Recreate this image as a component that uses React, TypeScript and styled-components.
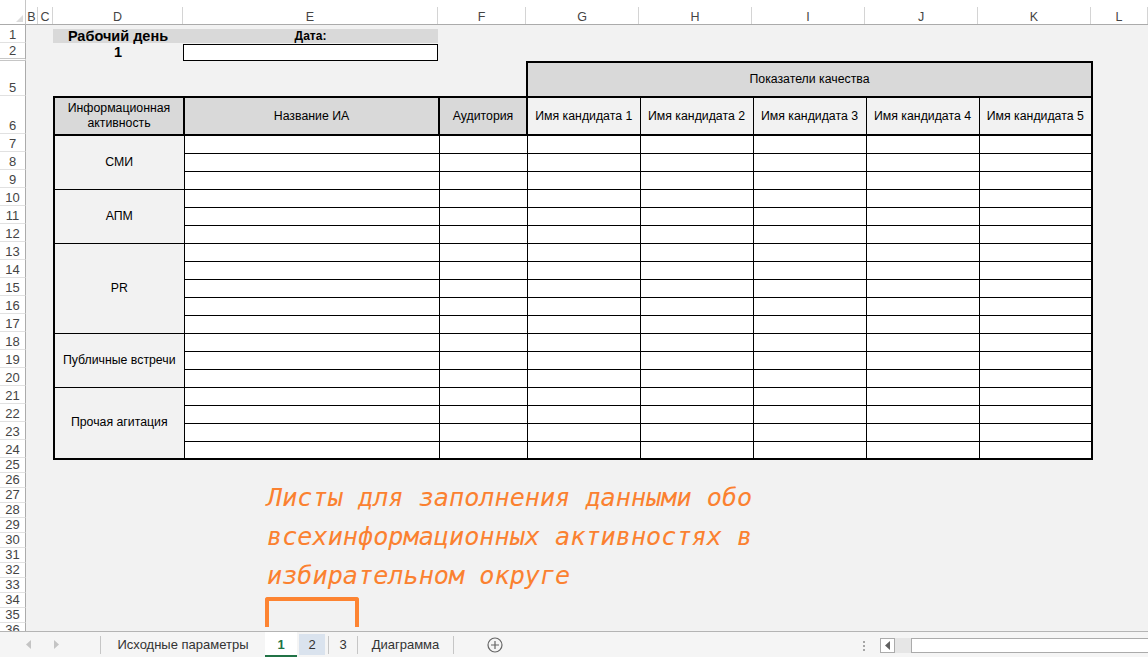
import React from "react";
import styled, { createGlobalStyle } from "styled-components";

const GlobalStyle = createGlobalStyle`
  html, body {
    margin: 0;
    padding: 0;
  }
  body {
    font-family: "Liberation Sans", Arial, sans-serif;
    background: #f2f2f2;
  }
  #root {
    width: 1148px;
    height: 657px;
    overflow: hidden;
    display: flex;
    flex-direction: column;
  }
`;

const COLUMNS = ["B", "C", "D", "E", "F", "G", "H", "I", "J", "K", "L"];

// visible row numbers (3 and 4 are hidden in the workbook)
const ROW_NUMBERS = [1, 2, 5, 6, ...Array.from({ length: 30 }, (_, i) => i + 7)];

const GROUPS: [string, number][] = [
  ["СМИ", 3],
  ["АПМ", 3],
  ["PR", 5],
  ["Публичные встречи", 3],
  ["Прочая агитация", 4],
];

const Sheet = styled.div`
  position: relative;
  flex: 1;
  min-height: 0;
  overflow: hidden;
  display: grid;
  grid-template-columns: 26px 12px 15px 130px 255px 88px repeat(5, 113px) 1fr;
  grid-template-rows: 25px 18px 18px 35px 38px repeat(18, 18px) repeat(12, 15px);
  background: #f2f2f2;
`;

const Corner = styled.div`
  grid-column: 1;
  grid-row: 1;
  background: #fff;
  border-right: 1px solid #c6c6c6;
  border-bottom: 1px solid #ababab;
  display: flex;
  align-items: flex-end;
  justify-content: flex-end;
  padding: 0 2px 2px 0;
`;

const ColHead = styled.div<{ $col: number }>`
  grid-column: ${(p) => p.$col};
  grid-row: 1;
  background: #fff;
  border-bottom: 1px solid #ababab;
  display: flex;
  align-items: flex-end;
`;

const ColLabel = styled.div`
  flex: 1;
  height: 17px;
  box-sizing: border-box;
  padding-top: 3px;
  border-right: 1px solid #d4d4d4;
  text-align: center;
  font-size: 12.5px;
  line-height: 14px;
  color: #444;
`;

const RowHead = styled.div<{ $row: number; $hiddenAfter?: boolean }>`
  grid-column: 1;
  grid-row: ${(p) => p.$row};
  background: #fff;
  border-right: 1px solid #ababab;
  border-bottom: ${(p) => (p.$hiddenAfter ? "3px double #c6c6c6" : "1px solid #e1e1e1")};
  display: flex;
  align-items: flex-end;
  justify-content: center;
  font-size: 13px;
  line-height: 15px;
  color: #444;
`;

const GrayLabel = styled.div<{ $col: number; $size: number }>`
  grid-column: ${(p) => p.$col};
  grid-row: 2;
  margin-top: 4px;
  background: #d9d9d9;
  display: flex;
  align-items: center;
  justify-content: center;
  font-weight: bold;
  font-size: ${(p) => p.$size}px;
  color: #000;
`;

const DayNumber = styled.div`
  grid-column: 4;
  grid-row: 3;
  display: flex;
  align-items: center;
  justify-content: center;
  font-weight: bold;
  font-size: 14.5px;
  color: #000;
`;

const DateBox = styled.div`
  grid-column: 5;
  grid-row: 3;
  margin-top: 1px;
  background: #fff;
  border: 1px solid #000;
`;

const Table = styled.table`
  grid-column: 4 / 12;
  grid-row: 4 / 24;
  align-self: start;
  width: 1038px;
  table-layout: fixed;
  border-collapse: collapse;
  font-size: 12.3px;
  color: #000;
`;

const Col = styled.col<{ $w: number }>`
  width: ${(p) => p.$w}px;
`;

const Row = styled.tr<{ $h: number }>`
  height: ${(p) => p.$h}px;
`;

const edge = (thick: boolean) => (thick ? "2px solid #000" : "1px solid #000");

const Cell = styled.td<{ $fill?: string; $thick?: string }>`
  padding: 0 4px;
  text-align: center;
  vertical-align: middle;
  line-height: 15px;
  background: ${(p) => p.$fill ?? "#fff"};
  border-top: ${(p) => edge(!!p.$thick?.includes("t"))};
  border-right: ${(p) => edge(!!p.$thick?.includes("r"))};
  border-bottom: ${(p) => edge(!!p.$thick?.includes("b"))};
  border-left: ${(p) => edge(!!p.$thick?.includes("l"))};
`;

const Blank = styled.td`
  border: none;
  background: transparent;
`;

const Callout = styled.div`
  position: absolute;
  left: 267px;
  top: 478px;
  width: 540px;
  font-family: "DejaVu Sans Mono", monospace;
  font-style: oblique;
  font-size: 25.2px;
  line-height: 39px;
  color: #fb8130;
  white-space: nowrap;
`;

const Bracket = styled.div`
  position: absolute;
  left: 265px;
  top: 597px;
  width: 86px;
  height: 26px;
  border: 4px solid #fd8432;
  border-bottom: none;
  border-radius: 3px 3px 0 0;
`;

const TabBar = styled.div`
  height: 25px;
  flex-shrink: 0;
  border-top: 1px solid #b4b4b4;
  background: #f5f5f5;
  display: flex;
  align-items: stretch;
  font-size: 13px;
  color: #444;
`;

const NavArea = styled.div`
  width: 100px;
  display: flex;
  align-items: center;
  gap: 23px;
  padding-left: 26px;
  box-sizing: border-box;
`;

const Divider = styled.span`
  width: 1px;
  height: 18px;
  align-self: center;
  background: #c6c6c6;
`;

const Tab = styled.div<{ $w: number; $active?: boolean; $hover?: boolean }>`
  width: ${(p) => p.$w}px;
  display: flex;
  align-items: center;
  justify-content: center;
  box-sizing: border-box;
  background: ${(p) => (p.$active ? "#fff" : p.$hover ? "#dae3ee" : "transparent")};
  margin: ${(p) => (p.$hover ? "2px 3px 2px 2px" : "0")};
  border-bottom: ${(p) => (p.$active ? "2px solid #217346" : "none")};
  color: ${(p) => (p.$active ? "#217346" : "#333")};
  font-weight: ${(p) => (p.$active ? "bold" : "normal")};
  padding-top: ${(p) => (p.$active ? "2px" : "0")};
`;

const AddSheet = styled.div`
  margin-left: 33px;
  display: flex;
  align-items: center;
`;

const RightArea = styled.div`
  margin-left: auto;
  width: 288px;
  display: flex;
  align-items: flex-start;
  padding-top: 6px;
  box-sizing: border-box;
`;

const Grip = styled.div`
  width: 3px;
  margin: 3px 14px 0 3px;
  display: flex;
  flex-direction: column;
  gap: 2px;
  span {
    width: 2px;
    height: 2px;
    background: #a6a6a6;
  }
`;

const ScrollButton = styled.div`
  width: 15px;
  height: 15px;
  box-sizing: border-box;
  border: 1px solid #ababab;
  background: #fff;
  display: flex;
  align-items: center;
  justify-content: center;
`;

const ScrollTrack = styled.div`
  width: 16px;
  height: 15px;
  background: #e6e6e6;
`;

const ScrollThumb = styled.div`
  flex: 1;
  height: 15px;
  box-sizing: border-box;
  border: 1px solid #ababab;
  border-right: none;
  background: #fff;
`;

const Arrow = ({ dir, color }: { dir: "left" | "right"; color: string }) => (
  <svg width="5" height="9" viewBox="0 0 5 9">
    <path d={dir === "left" ? "M5 0 L0 4.5 L5 9 Z" : "M0 0 L5 4.5 L0 9 Z"} fill={color} />
  </svg>
);

export default function App() {
  let groupRow = 0;
  const groupStarts = new Map<number, [string, number]>();
  GROUPS.forEach((g) => {
    groupStarts.set(groupRow, g);
    groupRow += g[1];
  });

  return (
    <>
      <GlobalStyle />
      <Sheet>
        <Corner>
          <svg width="7" height="7" viewBox="0 0 7 7">
            <path d="M7 0 L7 7 L0 7 Z" fill="#dcdcdc" />
          </svg>
        </Corner>
        {COLUMNS.map((c, i) => (
          <ColHead key={c} $col={i + 2}>
            <ColLabel>{c}</ColLabel>
          </ColHead>
        ))}
        {ROW_NUMBERS.map((n, i) => (
          <RowHead key={n} $row={i + 2} $hiddenAfter={n === 2}>
            {n}
          </RowHead>
        ))}

        <GrayLabel $col={4} $size={14.5}>
          Рабочий день
        </GrayLabel>
        <GrayLabel $col={5} $size={12}>
          Дата:
        </GrayLabel>
        <DayNumber>1</DayNumber>
        <DateBox />

        <Table>
          <colgroup>
            <Col $w={130} />
            <Col $w={255} />
            <Col $w={88} />
            {[1, 2, 3, 4, 5].map((i) => (
              <Col key={i} $w={113} />
            ))}
          </colgroup>
          <tbody>
            <Row $h={35}>
              <Blank colSpan={3} />
              <Cell colSpan={5} $fill="#d9d9d9" $thick="tlrb">
                Показатели качества
              </Cell>
            </Row>
            <Row $h={38}>
              <Cell $fill="#d9d9d9" $thick="tlrb">
                Информационная
                <br />
                активность
              </Cell>
              <Cell $fill="#d9d9d9" $thick="tlrb">
                Название ИА
              </Cell>
              <Cell $fill="#d9d9d9" $thick="tlrb">
                Аудитория
              </Cell>
              {[1, 2, 3, 4, 5].map((i) => (
                <Cell key={i} $fill="#f2f2f2" $thick={i === 5 ? "tbr" : "tb"}>
                  Имя кандидата {i}
                </Cell>
              ))}
            </Row>
            {Array.from({ length: 18 }, (_, r) => {
              const group = groupStarts.get(r);
              const last = r === 17;
              return (
                <Row key={r} $h={18}>
                  {group && (
                    <Cell
                      rowSpan={group[1]}
                      $fill="#f2f2f2"
                      $thick={r + group[1] === 18 ? "lb" : "l"}
                    >
                      {group[0]}
                    </Cell>
                  )}
                  {[0, 1, 2, 3, 4, 5, 6].map((c) => (
                    <Cell
                      key={c}
                      $thick={(c === 6 ? "r" : "") + (last ? "b" : "")}
                    />
                  ))}
                </Row>
              );
            })}
          </tbody>
        </Table>

        <Callout>
          Листы для заполнения данными обо
          <br />
          всехинформационных активностях в
          <br />
          избирательном округе
        </Callout>
        <Bracket />
      </Sheet>

      <TabBar>
        <NavArea>
          <Arrow dir="left" color="#c4c4c4" />
          <Arrow dir="right" color="#c4c4c4" />
        </NavArea>
        <Divider />
        <Tab $w={164}>Исходные параметры</Tab>
        <Tab $w={32} $active>
          1
        </Tab>
        <Tab $w={26} $hover>
          2
        </Tab>
        <Divider />
        <Tab $w={28}>3</Tab>
        <Divider />
        <Tab $w={95}>Диаграмма</Tab>
        <Divider />
        <AddSheet>
          <svg width="16" height="16" viewBox="0 0 16 16">
            <circle cx="8" cy="8" r="7" fill="none" stroke="#666" strokeWidth="1.2" />
            <path d="M8 4 V12 M4 8 H12" stroke="#666" strokeWidth="1.2" />
          </svg>
        </AddSheet>
        <RightArea>
          <Grip>
            <span />
            <span />
            <span />
          </Grip>
          <ScrollButton>
            <Arrow dir="left" color="#606060" />
          </ScrollButton>
          <ScrollTrack />
          <ScrollThumb />
        </RightArea>
      </TabBar>
    </>
  );
}
